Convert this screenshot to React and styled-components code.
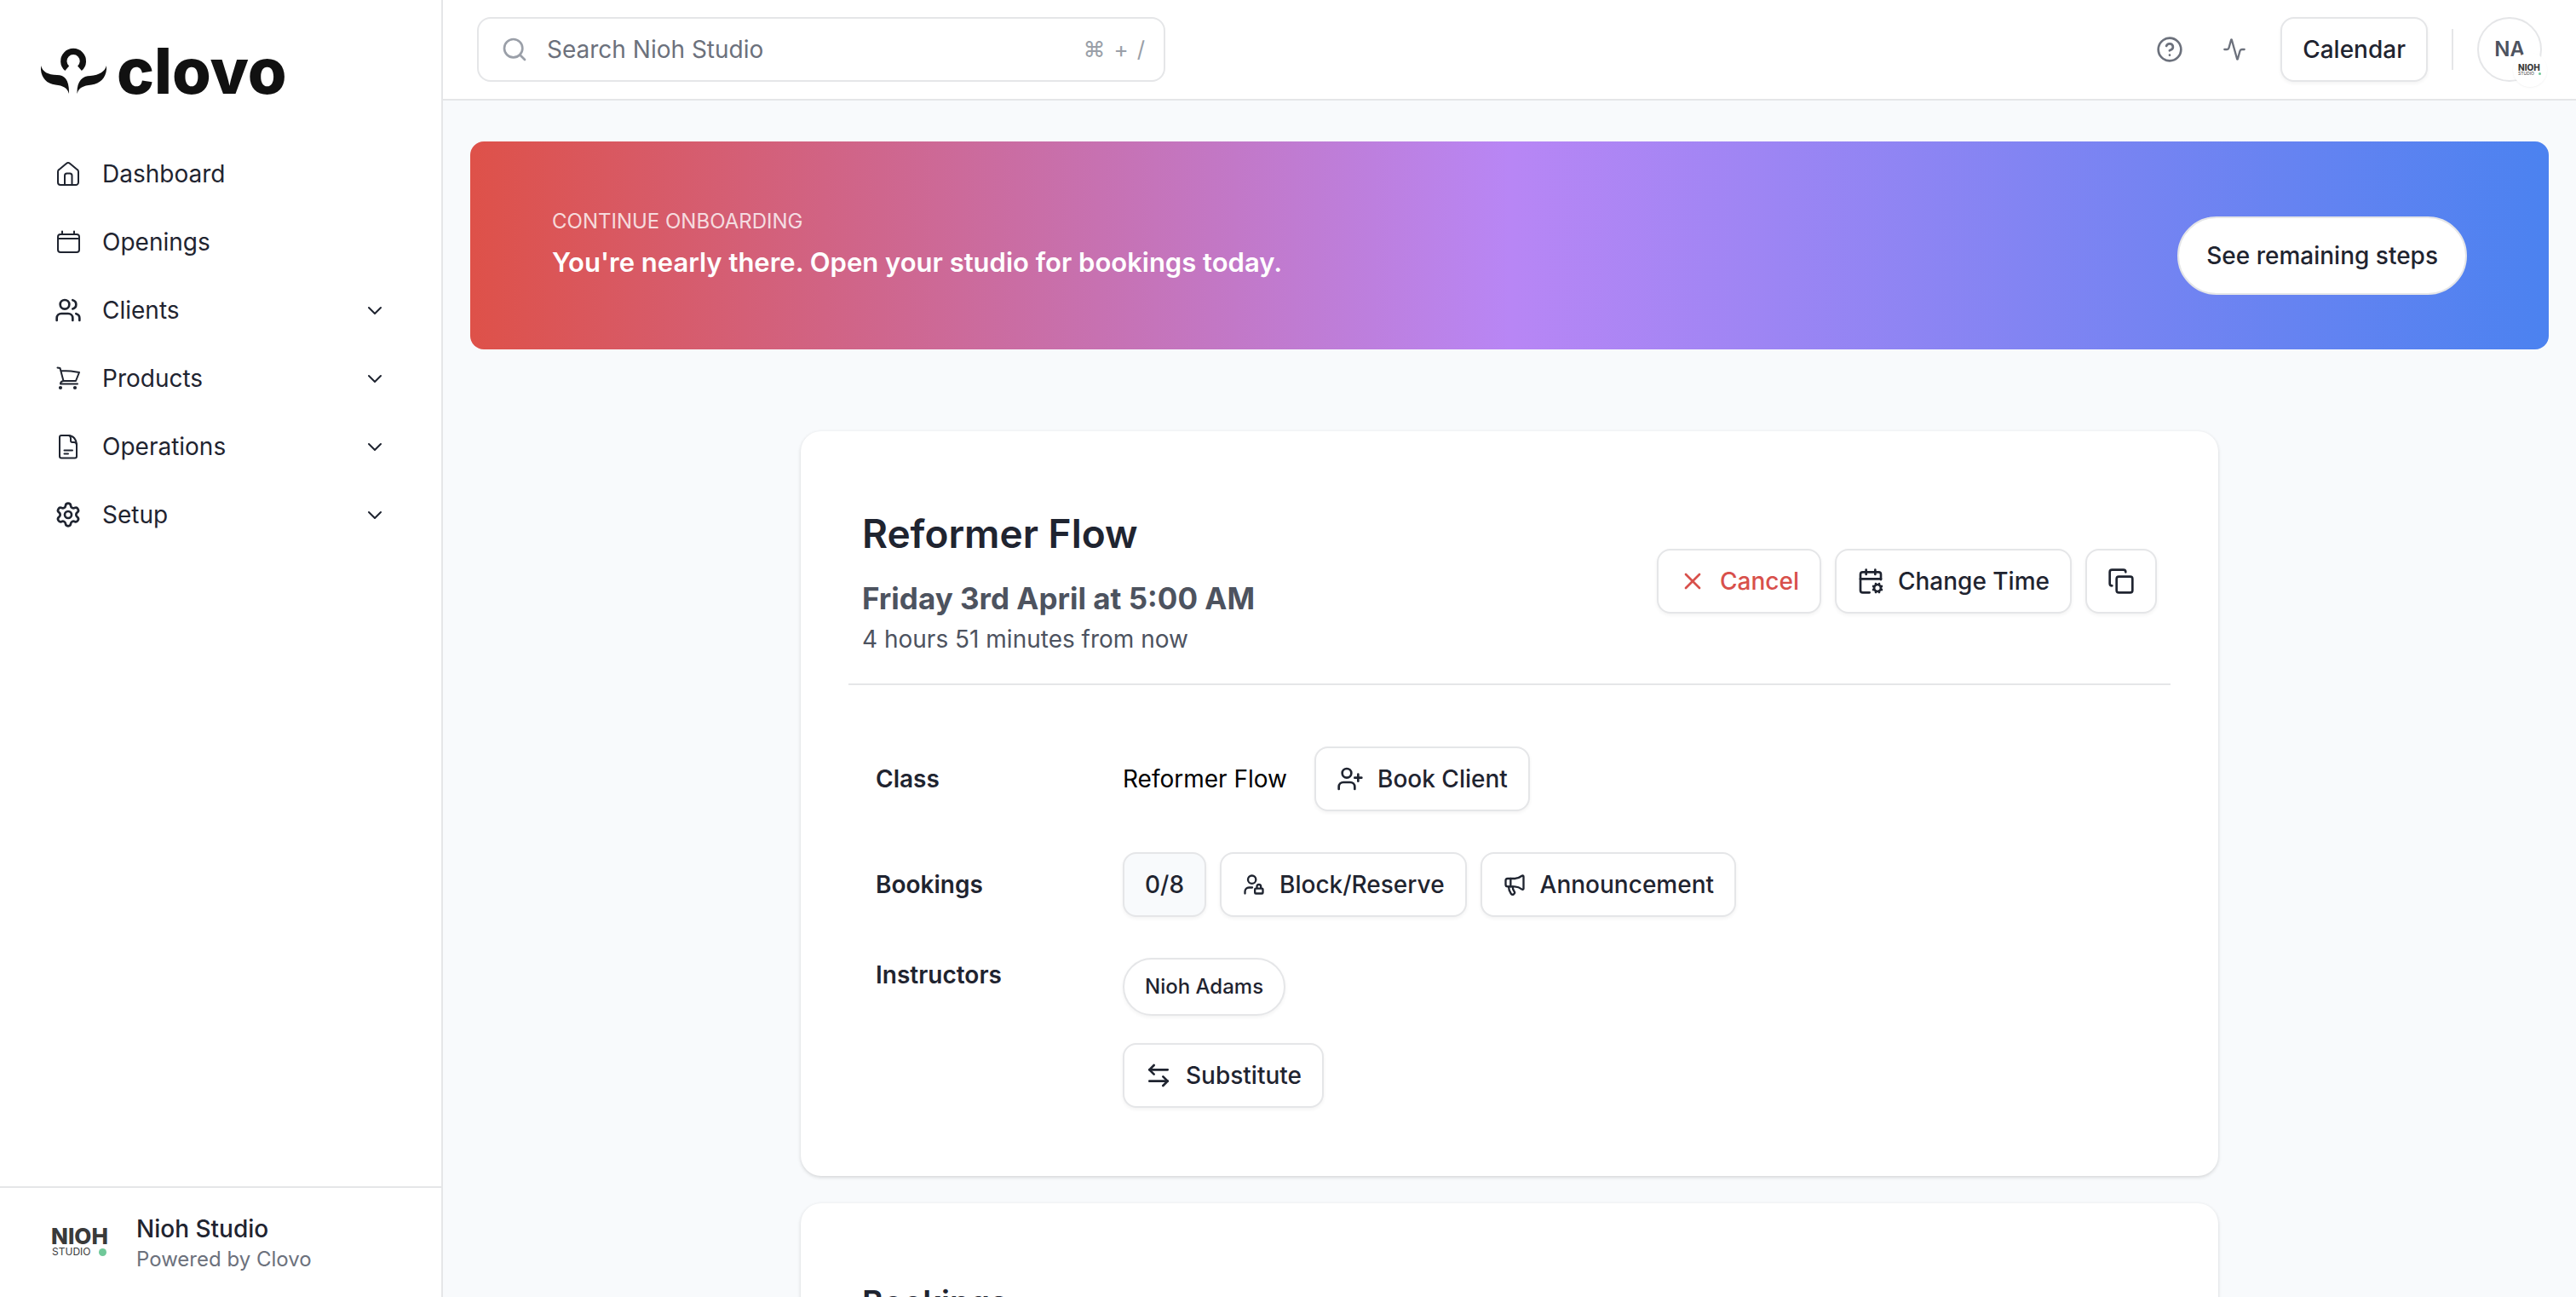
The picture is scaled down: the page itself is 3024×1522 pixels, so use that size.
import React from "react";
import styled, { createGlobalStyle, css } from "styled-components";
import {
  Activity,
  ArrowLeftRight,
  CalendarCog,
  CircleQuestionMark,
  Copy,
  Megaphone,
  Search,
  Settings,
  UserLock,
  UserPlus,
  Users,
  X,
} from "lucide-react";

const ink = "#1f2430";
const slate = "#4d535f";
const muted = "#6c717c";
const faint = "#9a9fa8";
const line = "#e5e6e8";
const canvas = "#f8fafc";

const GlobalStyle = createGlobalStyle`
  *, *::before, *::after { box-sizing: border-box; }
  body {
    margin: 0;
    background: ${canvas};
    color: ${ink};
    font-family: Inter, "Liberation Sans", sans-serif;
    font-size: 28px;
    line-height: 40px;
  }
  button, input { font: inherit; color: inherit; }
  h1, h2, p, dl, dd, ul { margin: 0; padding: 0; }
  svg { display: block; flex-shrink: 0; }
`;

const Shell = styled.div`
  display: flex;
  height: 100vh;
`;

/* Sidebar */

const Sidebar = styled.aside`
  display: flex;
  flex-direction: column;
  flex: 0 0 520px;
  background: #fff;
  border-right: 2px solid ${line};
`;

const Brand = styled.a`
  display: flex;
  align-items: center;
  gap: 12px;
  height: 86px;
  margin: 40px 48px 0;
  color: #111;
  text-decoration: none;
`;

const Wordmark = styled.span`
  font-size: 74px;
  font-weight: 800;
  line-height: 72px;
`;

const NavList = styled.ul`
  flex: 1;
  margin-top: 38px;
  padding: 0 70px 0 64px;
  list-style: none;
`;

const navRow = css`
  display: flex;
  align-items: center;
  gap: 24px;
  width: 100%;
  height: 80px;
  padding: 0;
  border: 0;
  background: none;
  color: ${ink};
  text-align: left;
  text-decoration: none;
  cursor: pointer;
`;

const NavLink = styled.a`
  ${navRow}
`;

const NavToggle = styled.button`
  ${navRow}
`;

const NavLabel = styled.span`
  flex: 1;
`;

const StudioFooter = styled.footer`
  display: flex;
  align-items: center;
  gap: 30px;
  height: 130px;
  padding: 0 60px;
  border-top: 2px solid ${line};
`;

const StudioName = styled.p`
  font-weight: 500;
`;

const StudioNote = styled.p`
  font-size: 24px;
  line-height: 32px;
  color: ${muted};
`;

/* Studio logo, drawn at two sizes */

const StudioMark = styled.div`
  display: flex;
  flex-direction: column;
  width: ${(p) => (p.$small ? 28 : 70)}px;
  color: #3a3a3a;
`;

const StudioMarkName = styled.span`
  font-size: ${(p) => (p.$small ? 10 : 26)}px;
  line-height: ${(p) => (p.$small ? 8 : 22)}px;
  font-weight: 800;
`;

const StudioMarkLine = styled.span`
  display: flex;
  align-items: center;
  justify-content: space-between;
  padding: ${(p) => (p.$small ? "0 1px 0 0" : "0 5px 0 1px")};
  font-size: ${(p) => (p.$small ? 5 : 12)}px;
  line-height: ${(p) => (p.$small ? 6 : 14)}px;

  &::after {
    content: "";
    width: ${(p) => (p.$small ? 3 : 9)}px;
    height: ${(p) => (p.$small ? 3 : 9)}px;
    border-radius: 50%;
    background: #70c899;
  }
`;

/* Top bar */

const Page = styled.div`
  display: flex;
  flex-direction: column;
  flex: 1;
  min-width: 0;
`;

const TopBar = styled.header`
  display: flex;
  align-items: center;
  justify-content: space-between;
  flex-shrink: 0;
  height: 118px;
  padding: 0 40px;
  background: #fff;
  border-bottom: 2px solid ${line};
`;

const SearchBox = styled.label`
  display: flex;
  align-items: center;
  flex: 0 1 808px;
  height: 76px;
  gap: 22px;
  padding: 0 22px 0 26px;
  border: 2px solid ${line};
  border-radius: 16px;
  color: ${faint};
`;

const SearchInput = styled.input`
  flex: 1;
  min-width: 0;
  padding: 0;
  border: 0;
  outline: 0;
  background: none;

  &::placeholder {
    color: ${muted};
    opacity: 1;
  }
`;

const Shortcut = styled.span`
  display: flex;
  align-items: center;
  gap: 10px;
  font-size: 26px;
`;

const ShortcutKey = styled.kbd`
  font-family: Inter, "DejaVu Sans", sans-serif;
`;

const TopActions = styled.div`
  display: flex;
  align-items: center;
`;

const IconButton = styled.button`
  display: flex;
  align-items: center;
  justify-content: center;
  width: 76px;
  height: 76px;
  padding: 0;
  border: 0;
  background: none;
  color: ${muted};
  cursor: pointer;
`;

const Divider = styled.span`
  width: 2px;
  height: 48px;
  margin: 0 28px;
  background: ${line};
`;

const Avatar = styled.button`
  position: relative;
  width: 76px;
  height: 76px;
  padding: 0;
  border: 2px solid ${line};
  border-radius: 50%;
  background: #fff;
  color: ${slate};
  font-size: 24px;
  font-weight: 600;
  text-align: center;
  cursor: pointer;
`;

const AvatarBadge = styled.span`
  position: absolute;
  right: -8px;
  bottom: -8px;
  display: flex;
  align-items: center;
  justify-content: center;
  width: 40px;
  height: 40px;
  border-radius: 50%;
  background: #fff;
  box-shadow: 0 1px 2px rgba(0, 0, 0, 0.05);
  text-align: left;
  font-weight: 400;
`;

const Button = styled.button`
  display: inline-flex;
  align-items: center;
  gap: 16px;
  height: 76px;
  padding: 0 24px;
  border: 2px solid ${line};
  border-radius: 16px;
  background: ${(p) => (p.$tinted ? canvas : "#fff")};
  box-shadow: 0 2px 4px rgba(0, 0, 0, 0.05);
  color: ${(p) => (p.$danger ? "#d8504b" : ink)};
  font-weight: 500;
  white-space: nowrap;
  cursor: pointer;
`;

const CalendarButton = styled(Button)`
  margin-left: 16px;
`;

/* Main column */

const Main = styled.main`
  flex: 1;
  min-height: 0;
  padding: 48px 32px;
  overflow-y: auto;
  scrollbar-width: none;
`;

const Banner = styled.section`
  display: flex;
  align-items: flex-start;
  justify-content: space-between;
  padding: 76px 96px 64px;
  border-radius: 16px;
  background: linear-gradient(to right, #de5149, #b886f5 50%, #4b82f0);
  color: #fff;
`;

const BannerKicker = styled.p`
  font-size: 24px;
  line-height: 36px;
  color: rgba(255, 255, 255, 0.8);
`;

const BannerTitle = styled.h2`
  font-size: 31px;
  line-height: 60px;
  font-weight: 600;
`;

const PillButton = styled(Button)`
  height: 92px;
  margin-top: 12px;
  padding: 0 32px;
  border-radius: 46px;
  box-shadow: none;
`;

const Cards = styled.div`
  display: flex;
  flex-direction: column;
  gap: 32px;
  max-width: 1664px;
  margin: 96px auto 0;
`;

const Card = styled.section`
  padding: 88px 56px 80px;
  border-radius: 24px;
  background: #fff;
  box-shadow: 0 2px 4px rgba(0, 0, 0, 0.12), 0 0 4px rgba(0, 0, 0, 0.04);
`;

const CardHeader = styled.header`
  display: flex;
  align-items: center;
  justify-content: space-between;
  padding: 0 16px 32px;
  border-bottom: 2px solid ${line};
`;

const ClassTitle = styled.h1`
  margin-bottom: 16px;
  font-size: 46px;
  line-height: 64px;
  font-weight: 600;
`;

const ClassTime = styled.p`
  font-size: 35px;
  line-height: 56px;
  font-weight: 700;
  color: ${slate};
`;

const ClassCountdown = styled.p`
  color: ${slate};
`;

const Actions = styled.div`
  display: flex;
  align-items: center;
  gap: ${(p) => (p.$wide ? 32 : 16)}px;
`;

const Details = styled.dl`
  display: flex;
  flex-direction: column;
  gap: 48px;
  padding: 72px 32px 0;
`;

const DetailRow = styled.div`
  display: grid;
  grid-template-columns: 290px 1fr;
  align-items: ${(p) => (p.$top ? "start" : "center")};
`;

const DetailLabel = styled.dt`
  font-weight: 600;
`;

const ClassName = styled.span`
  color: #000;
`;

const InstructorStack = styled.div`
  display: flex;
  flex-direction: column;
  align-items: flex-start;
  gap: 32px;
`;

const Chip = styled(Button)`
  height: 68px;
  border-radius: 34px;
  font-size: 24px;
`;

const BookingsTitle = styled.h2`
  padding: 0 16px;
  font-size: 38px;
  line-height: 56px;
  font-weight: 600;
`;

/* Drawings */

const iconProps = {
  width: 32,
  height: 32,
  viewBox: "0 0 32 32",
  fill: "none",
  stroke: "currentColor",
  strokeWidth: 2,
  strokeLinecap: "round",
  strokeLinejoin: "round",
  "aria-hidden": true,
};

const HomeIcon = () => (
  <svg {...iconProps}>
    <path d="M4 13.6c0-1.2.5-2 1.4-2.7l8.4-7a3.4 3.4 0 0 1 4.4 0l8.4 7c.9.7 1.4 1.5 1.4 2.7V26a3 3 0 0 1-3 3H7a3 3 0 0 1-3-3z" />
    <path d="M12 29V18a2.500 2.500 0 0 1 2.500-2.500h3.500a2.500 2.500 0 0 1 2.500 2.500v11" />
  </svg>
);

const OpeningsIcon = () => (
  <svg {...iconProps}>
    <rect x="4" y="7" width="25" height="21" rx="3" />
    <path d="M4 12h25M9 3.500V7M23 3.500V7" />
  </svg>
);

const CartIcon = () => (
  <svg {...iconProps}>
    <path d="M3.500 3.500l3 .6 4 14.900M7.300 7l12 .5 9.700 1.500-4 10H10.500c-2 .3-3.500 1.500-3.500 3.500h20" />
    <circle cx="7" cy="27" r="1.100" fill="currentColor" />
    <circle cx="24" cy="27" r="1.100" fill="currentColor" />
  </svg>
);

const DocumentIcon = () => (
  <svg {...iconProps}>
    <path d="M16.500 3H8a2 2 0 0 0-2 2v22.500a2 2 0 0 0 2 2h16a2 2 0 0 0 2-2V14c0-6-4-11-9.500-11z" />
    <path d="M16.500 3c1.700 0 2.500 1.500 2.500 3.500v2.500a2 2 0 0 0 2 2h2c1.700 0 3 1.200 3 3M11.500 20.500H21M11.500 24.500H16" />
  </svg>
);

const ChevronIcon = () => (
  <svg
    width="16"
    height="10"
    viewBox="0 0 16 10"
    fill="none"
    stroke="currentColor"
    strokeWidth="2"
    strokeLinecap="round"
    strokeLinejoin="round"
    aria-hidden="true"
  >
    <path d="M1 2l7 7 7-7" />
  </svg>
);

const CloverMark = () => (
  <svg width="77" height="54" viewBox="0 0 77 54" fill="#111" aria-hidden="true">
    <path
      d="M30.700 24.300a11.300 11.300 0 1 1 14.800 0"
      fill="none"
      stroke="#111"
      strokeWidth="7.300"
    />
    <path d="M0 21c2 7 8 11 19 11 9 0 14.500 6 14 22-2-7-7-9.500-16-10.500C5 42-1 33 0 21z" />
    <path d="M77 21c-2 7-8 11-19 12-9 0-16 6-15.500 21 2-7 7-9.500 17-10.500C71 42 78 33 77 21z" />
  </svg>
);

const StudioLogo = ({ small }) => (
  <StudioMark $small={small}>
    <StudioMarkName $small={small}>NIOH</StudioMarkName>
    <StudioMarkLine $small={small}>STUDIO</StudioMarkLine>
  </StudioMark>
);

const links = [
  { label: "Dashboard", icon: <HomeIcon /> },
  { label: "Openings", icon: <OpeningsIcon /> },
];

const groups = [
  { label: "Clients", icon: <Users size={32} /> },
  { label: "Products", icon: <CartIcon /> },
  { label: "Operations", icon: <DocumentIcon /> },
  { label: "Setup", icon: <Settings size={32} /> },
];

export default function App() {
  return (
    <>
      <GlobalStyle />
      <Shell>
        <Sidebar>
          <Brand href="#">
            <CloverMark />
            <Wordmark>clovo</Wordmark>
          </Brand>
          <NavList>
            {links.map(({ label, icon }) => (
              <li key={label}>
                <NavLink href="#">
                  {icon}
                  <NavLabel>{label}</NavLabel>
                </NavLink>
              </li>
            ))}
            {groups.map(({ label, icon }) => (
              <li key={label}>
                <NavToggle type="button" aria-expanded="false">
                  {icon}
                  <NavLabel>{label}</NavLabel>
                  <ChevronIcon />
                </NavToggle>
              </li>
            ))}
          </NavList>
          <StudioFooter>
            <StudioLogo />
            <div>
              <StudioName>Nioh Studio</StudioName>
              <StudioNote>Powered by Clovo</StudioNote>
            </div>
          </StudioFooter>
        </Sidebar>

        <Page>
          <TopBar>
            <SearchBox>
              <Search size={32} aria-hidden="true" />
              <SearchInput
                type="search"
                aria-label="Search Nioh Studio"
                placeholder="Search Nioh Studio"
              />
              <Shortcut>
                <ShortcutKey>⌘</ShortcutKey>
                <span>+</span>
                <ShortcutKey>/</ShortcutKey>
              </Shortcut>
            </SearchBox>
            <TopActions>
              <IconButton type="button" aria-label="Help">
                <CircleQuestionMark size={32} />
              </IconButton>
              <IconButton type="button" aria-label="Activity">
                <Activity size={28} />
              </IconButton>
              <CalendarButton type="button">Calendar</CalendarButton>
              <Divider />
              <Avatar type="button" aria-label="Account">
                NA
                <AvatarBadge>
                  <StudioLogo small />
                </AvatarBadge>
              </Avatar>
            </TopActions>
          </TopBar>

          <Main>
            <Banner>
              <div>
                <BannerKicker>CONTINUE ONBOARDING</BannerKicker>
                <BannerTitle>
                  You're nearly there. Open your studio for bookings today.
                </BannerTitle>
              </div>
              <PillButton type="button">See remaining steps</PillButton>
            </Banner>

            <Cards>
              <Card>
                <CardHeader>
                  <div>
                    <ClassTitle>Reformer Flow</ClassTitle>
                    <ClassTime>Friday 3rd April at 5:00 AM</ClassTime>
                    <ClassCountdown>4 hours 51 minutes from now</ClassCountdown>
                  </div>
                  <Actions>
                    <Button type="button" $danger>
                      <X size={32} />
                      Cancel
                    </Button>
                    <Button type="button">
                      <CalendarCog size={32} />
                      Change Time
                    </Button>
                    <Button type="button" aria-label="Duplicate class">
                      <Copy size={32} />
                    </Button>
                  </Actions>
                </CardHeader>
                <Details>
                  <DetailRow>
                    <DetailLabel>Class</DetailLabel>
                    <dd>
                      <Actions $wide>
                        <ClassName>Reformer Flow</ClassName>
                        <Button type="button">
                          <UserPlus size={32} />
                          Book Client
                        </Button>
                      </Actions>
                    </dd>
                  </DetailRow>
                  <DetailRow>
                    <DetailLabel>Bookings</DetailLabel>
                    <dd>
                      <Actions>
                        <Button type="button" $tinted>
                          0/8
                        </Button>
                        <Button type="button">
                          <UserLock size={28} />
                          Block/Reserve
                        </Button>
                        <Button type="button">
                          <Megaphone size={28} />
                          Announcement
                        </Button>
                      </Actions>
                    </dd>
                  </DetailRow>
                  <DetailRow $top>
                    <DetailLabel>Instructors</DetailLabel>
                    <dd>
                      <InstructorStack>
                        <Chip type="button">Nioh Adams</Chip>
                        <Button type="button">
                          <ArrowLeftRight size={32} />
                          Substitute
                        </Button>
                      </InstructorStack>
                    </dd>
                  </DetailRow>
                </Details>
              </Card>
              <Card>
                <BookingsTitle>Bookings</BookingsTitle>
              </Card>
            </Cards>
          </Main>
        </Page>
      </Shell>
    </>
  );
}
